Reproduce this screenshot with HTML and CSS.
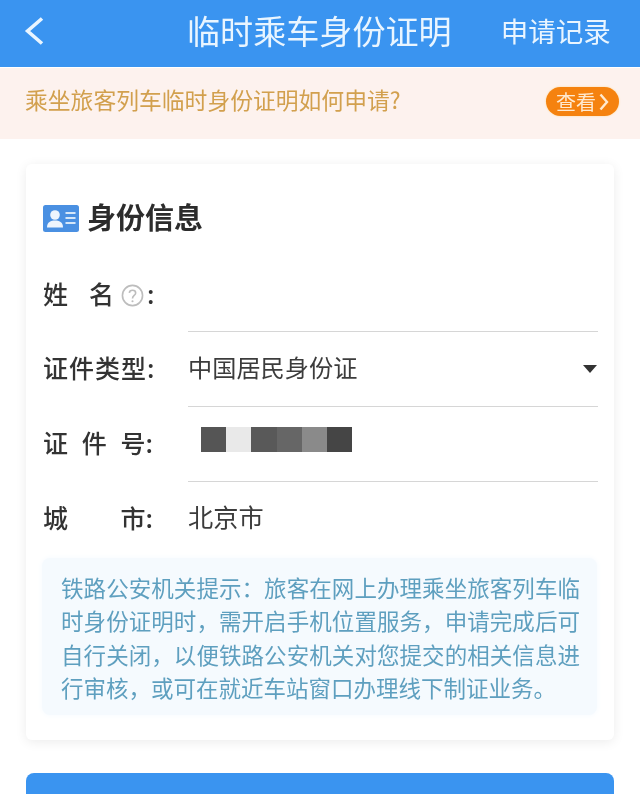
FILE: index.html
```html
<!DOCTYPE html>
<html lang="zh-CN">
<head>
<meta charset="utf-8">
<title>临时乘车身份证明</title>
<link rel="stylesheet" href="styles.css">
</head>
<body>
<div class="page">
  <header class="topbar">
    <svg class="back" viewBox="0 0 20 28" width="20" height="28"><path d="M18 1.5 L3.6 14 L18 26.5" fill="none" stroke="#e9f5ff" stroke-width="3.6"/></svg>
    <h1 class="title">临时乘车身份证明</h1>
    <span class="records">申请记录</span>
  </header>
  <div class="notice">
    <span class="notice-text">乘坐旅客列车临时身份证明如何申请?</span>
    <span class="pill">查看<svg viewBox="0 0 10 18" width="10" height="18"><path d="M1.5 1.5 L8 9 L1.5 16.5" fill="none" stroke="#ffe9cf" stroke-width="2.4"/></svg></span>
  </div>
  <main class="card">
    <div class="card-head">
      <svg class="id-icon" viewBox="0 0 36 27" width="36" height="27">
        <rect width="36" height="27" rx="2.5" fill="#4a90e2"/>
        <circle cx="12" cy="10" r="4.8" fill="#eef5fd"/>
        <path d="M4 22.5 C4 17 8 15.5 12 15.5 C16 15.5 20 17 20 22.5 Z" fill="#eef5fd"/>
        <path d="M22.5 8h10M22.5 13h10M22.5 18h10" stroke="#d5e7f9" stroke-width="2"/>
      </svg>
      <h2 class="card-title">身份信息</h2>
    </div>
    <div class="row">
      <span class="label label-name"><span>姓</span><span class="gap-a">名</span><svg class="help" viewBox="0 0 24 24" width="23" height="23"><circle cx="12" cy="12" r="10.5" fill="none" stroke="#bdbdbd" stroke-width="1.7"/><path d="M8.7 9.3 C8.9 5.6 15.3 5.6 15.3 9.3 C15.3 12 12 12 12 15" fill="none" stroke="#bdbdbd" stroke-width="1.7"/><circle cx="12" cy="18" r="1.1" fill="#bdbdbd"/></svg><span class="colon">:</span></span>
      <div class="field"></div>
    </div>
    <div class="row">
      <span class="label">证件类型:</span>
      <div class="field field-select">中国居民身份证<span class="caret"></span></div>
    </div>
    <div class="row">
      <span class="label label-spread"><span>证</span><span>件</span><span>号:</span></span>
      <div class="field field-mask">
        <span class="mask m1"></span><span class="mask m2"></span><span class="mask m3"></span><span class="mask m4"></span><span class="mask m5"></span><span class="mask m6"></span>
      </div>
    </div>
    <div class="row">
      <span class="label label-spread"><span>城</span><span>市:</span></span>
      <div class="field field-plain">北京市</div>
    </div>
    <p class="tip">铁路公安机关提示：旅客在网上办理乘坐旅客列车临时身份证明时，需开启手机位置服务，申请完成后可自行关闭，以便铁路公安机关对您提交的相关信息进行审核，或可在就近车站窗口办理线下制证业务。</p>
  </main>
  <div class="submit"></div>
</div>
</body>
</html>
```
FILE: styles.css
```css
* { box-sizing: border-box; }
html, body { margin: 0; padding: 0; height: 794px; overflow: hidden; background: #fff; }
body { font-family: "Noto Sans CJK SC", "Noto Sans", sans-serif; }
.page { width: 640px; height: 794px; overflow: hidden; filter: blur(0.5px); }

.topbar { height: 67px; background: #3a94f0; display: flex; align-items: center; padding: 0 30px 0 24px; color: #e9f5ff; }
.back { flex: none; margin-top: -6px; }
.title { margin: -8px 0 0 143px; font-size: 33.1px; font-weight: 400; line-height: 40px; white-space: nowrap; }
.records { margin: -8px 0 0 49px; font-size: 27.5px; line-height: 36px; white-space: nowrap; }

.notice { margin-top: 1px; height: 71px; background: #fdf2ee; display: flex; align-items: center; justify-content: space-between; padding: 0 21px 0 25px; }
.notice-text { font-size: 22.8px; color: #d2a04e; line-height: 30px; margin-top: -7px; white-space: nowrap; }
.pill { height: 29px; width: 73px; border-radius: 15px; background: #f5820f; color: #ffe9cf; font-size: 20px; line-height: 28px; display: flex; align-items: center; justify-content: center; gap: 3px; margin-top: -4px; box-shadow: 0 0 2px #ffd890; }

.card { margin: 25px 26px 0; height: 576px; background: #fff; border-radius: 6px; box-shadow: 0 2px 12px rgba(0, 0, 0, 0.08); padding: 0 17px; }
.card-head { height: 93px; display: flex; align-items: center; gap: 8px; padding-top: 14px; }
.id-icon { flex: none; margin-top: 1px; }
.card-title { margin: -3px 0 0; font-size: 29px; font-weight: 700; line-height: 40px; color: #2c2c2c; }

.row { height: 75px; display: flex; align-items: stretch; }
.label { flex: none; width: 145px; font-size: 25px; font-weight: 500; color: #333; line-height: 75px; white-space: nowrap; letter-spacing: 1px; margin-top: -2px; }
.label-name { display: flex; align-items: center; letter-spacing: 0; margin-top: -3px; }
.gap-a { margin-left: 21px; }
.help { margin-left: 7px; margin-top: 5px; }
.colon { margin-left: 3px; }
.label-spread { display: flex; justify-content: space-between; letter-spacing: 0; width: 110px; margin-right: 35px; }

.field { flex: none; width: 410px; border-bottom: 1.5px solid #d6d6d6; font-size: 24.2px; color: #3c3c3c; line-height: 69px; position: relative; white-space: nowrap; }
.caret { position: absolute; right: 1px; top: 33px; border: 7px solid transparent; border-top: 8px solid #333; border-bottom: 0; }
.field-mask { display: flex; align-items: flex-start; padding: 20px 0 0 13px; }
.mask { width: 25.2px; height: 25px; }
.m1 { background: #555; }
.m2 { background: #e9e9e9; }
.m3 { background: #595959; }
.m4 { background: #666; }
.m5 { background: #8a8a8a; }
.m6 { background: #454545; }
.field-plain { border-bottom: 0; font-size: 25.2px; }

.tip { margin: 1px 0 0 -1px; height: 157px; width: 555px; background: #f5fafe; border-radius: 8px; box-shadow: 0 0 6px #f5fafe; padding: 13px 17px 0 19px; font-size: 22.5px; line-height: 33.3px; color: #5e9fbf; text-align: justify; }

.submit { margin: 33px 26px 0; height: 70px; background: #3a94f0; border-radius: 8px; }
```
